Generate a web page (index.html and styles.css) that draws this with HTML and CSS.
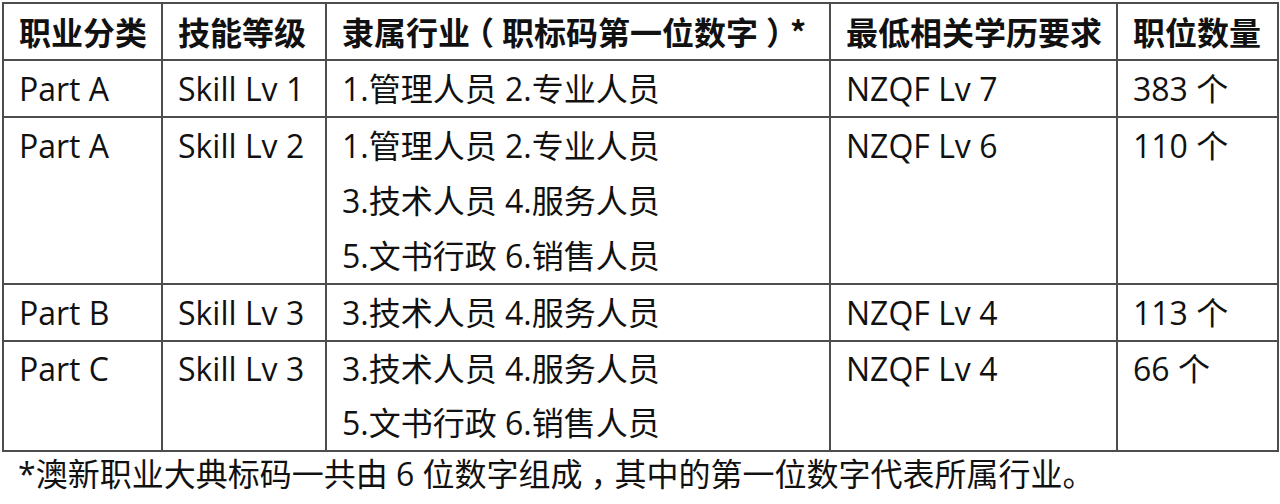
FILE: index.html
```html
<!DOCTYPE html>
<html lang="zh-CN">
<head>
<meta charset="utf-8">
<title>职业分类</title>
<link rel="stylesheet" href="styles.css">
</head>
<body>
<div class="page">
  <table class="jobs">
    <colgroup>
      <col class="c1"><col class="c2"><col class="c3"><col class="c4"><col class="c5">
    </colgroup>
    <thead>
      <tr>
        <th>职业分类</th>
        <th>技能等级</th>
        <th>隶属行业<span class="punct">（</span>职标码第一位数字<span class="punct">）</span>*</th>
        <th>最低相关学历要求</th>
        <th>职位数量</th>
      </tr>
    </thead>
    <tbody>
      <tr>
        <td>Part A</td>
        <td>Skill Lv 1</td>
        <td>1.管理人员 2.专业人员</td>
        <td>NZQF Lv 7</td>
        <td>383 个</td>
      </tr>
      <tr>
        <td>Part A</td>
        <td>Skill Lv 2</td>
        <td>1.管理人员 2.专业人员<br>3.技术人员 4.服务人员<br>5.文书行政 6.销售人员</td>
        <td>NZQF Lv 6</td>
        <td>110 个</td>
      </tr>
      <tr>
        <td>Part B</td>
        <td>Skill Lv 3</td>
        <td>3.技术人员 4.服务人员</td>
        <td>NZQF Lv 4</td>
        <td>113 个</td>
      </tr>
      <tr class="short">
        <td>Part C</td>
        <td>Skill Lv 3</td>
        <td>3.技术人员 4.服务人员<br>5.文书行政 6.销售人员</td>
        <td>NZQF Lv 4</td>
        <td>66 个</td>
      </tr>
    </tbody>
  </table>
  <p class="note">*澳新职业大典标码一共由 6 位数字组成<span class="punct">，</span>其中的第一位数字代表所属行业。</p>
</div>
</body>
</html>
```
FILE: styles.css
```css
html, body {
  margin: 0;
  padding: 0;
  background: #ffffff;
}

body {
  font-family: "Open Sans", "Noto Sans CJK SC", sans-serif;
  color: #111111;
}

.page {
  padding: 2px 0 0 2px;
}

.jobs {
  border-collapse: collapse;
  table-layout: fixed;
  width: 1275px;
}

.c1 { width: 159px; }
.c2 { width: 164px; }
.c3 { width: 504px; }
.c4 { width: 287px; }
.c5 { width: 161px; }

.jobs th,
.jobs td {
  border: 2px solid #4d4d4d;
  padding: 0 0 0 15px;
  text-align: left;
  vertical-align: top;
  font-size: 32px;
  line-height: 55px;
  white-space: nowrap;
}

.jobs th {
  font-family: "Noto Sans CJK SC", sans-serif;
  font-weight: 700;
}

.jobs td {
  font-weight: 400;
}

.short td {
  line-height: 54px;
}

.punct {
  display: inline-block;
  font-family: "Noto Sans CJK SC", sans-serif;
  font-feature-settings: "halt";
  margin: 0 0.25em;
}

.note {
  margin: 0;
  padding: 1px 0 0 16px;
  font-size: 32px;
  line-height: 38px;
  white-space: nowrap;
}
```
